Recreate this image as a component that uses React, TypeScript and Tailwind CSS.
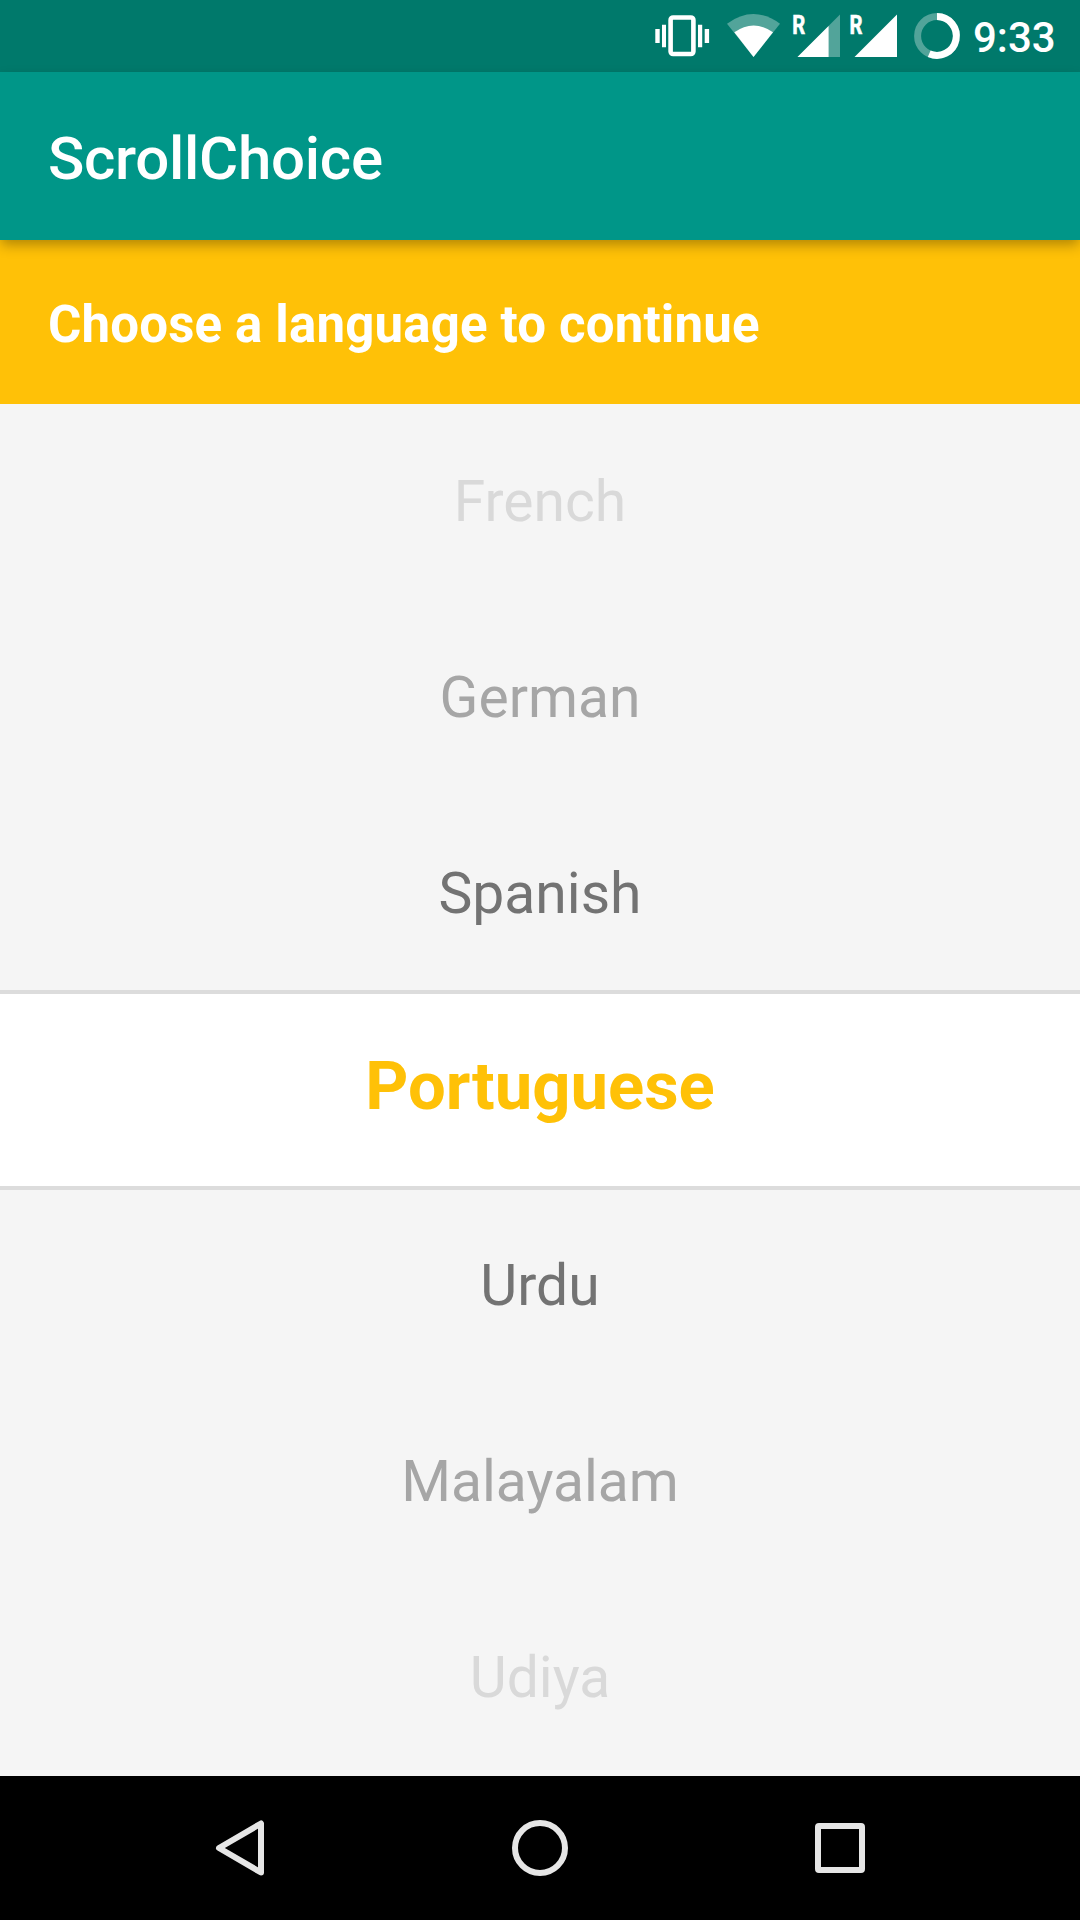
const rows = [
  { name: "French", cls: "text-[#d9d9d9]" },
  { name: "German", cls: "text-[#a6a6a6]" },
  { name: "Spanish", cls: "text-[#737373]" },
  { name: "Portuguese", cls: "" },
  { name: "Urdu", cls: "text-[#737373]" },
  { name: "Malayalam", cls: "text-[#a6a6a6]" },
  { name: "Udiya", cls: "text-[#d9d9d9]" },
];

export default function App() {
  return (
    <div className="flex h-[1920px] w-[1080px] flex-col overflow-hidden bg-[#f5f5f5] font-['Roboto',sans-serif]">
      <div className="flex h-[72px] shrink-0 bg-[#00796b]">
        <svg width="1080" height="72" viewBox="0 0 1080 72" fill="#fff">
          <rect x="670.600" y="17.500" width="22.800" height="36.500" rx="2.500" fill="none" stroke="#fff" strokeWidth="4.600" />
          <path d="M655.300 29h4.400v14h-4.400zM662 24.700h4v22.600h-4zM698 24.700h4.200v22.600h-4.200zM704.700 29h4.400v14h-4.400z" />
          <path d="M727 23.700Q753.500 4.500 780 23.700L753.500 57z" fillOpacity=".32" />
          <path d="M734.300 32.300Q753.500 18.500 773 32.300L753.500 57z" />
          <path d="M840 14.500V57H797.500z" fillOpacity=".32" />
          <path d="M828.600 25.900V57H797.500zM897 14.500V57H854.500z" />
          <circle cx="937" cy="36" r="19.400" fill="none" stroke="#fff" strokeOpacity=".32" strokeWidth="7" />
          <path d="M937 16.600a19.400 19.400 0 1 1-7.800 37.200" fill="none" stroke="#fff" strokeWidth="7" />
          <text x="792.300" y="33.500" fontSize="26" fontWeight="700" stroke="#fff" strokeWidth="0.600" textLength="13" lengthAdjust="spacingAndGlyphs">R</text>
          <text x="849.600" y="33.500" fontSize="26" fontWeight="700" stroke="#fff" strokeWidth="0.600" textLength="13" lengthAdjust="spacingAndGlyphs">R</text>
          <text x="973" y="52" fontSize="42" fontWeight="500">9:33</text>
        </svg>
      </div>
      <header className="z-10 flex h-[168px] shrink-0 items-center bg-[#009688] px-12 pt-[6px] text-[60px] font-medium tracking-[-0.27px] text-white shadow-[0_6px_12px_-1px_rgba(0,0,0,0.3)]">ScrollChoice</header>
      <div className="flex h-[164px] shrink-0 items-center bg-[#ffc107] px-12 pt-[7px] text-[51px] font-bold tracking-[0.16px] text-white">Choose a language to continue</div>
      <main className="flex h-[1372px] shrink-0 flex-col">
        {rows.map((r) =>
          r.name === "Portuguese" ? (
            <div key={r.name} className="-my-[2px] flex h-[200px] shrink-0 items-center justify-center border-y-4 border-[#dcdcdc] bg-white pb-[8px] text-[67px] font-bold text-[#ffc107]">{r.name}</div>
          ) : (
            <div key={r.name} className={"flex h-[196px] shrink-0 items-center justify-center text-[57px] " + r.cls}>{r.name}</div>
          )
        )}
      </main>
      <nav className="flex h-[144px] shrink-0 bg-black">
        <svg width="1080" height="144" viewBox="0 0 1080 144" fill="none" stroke="#e6e6e6" strokeWidth="6">
          <path d="M261 47.500V96.500L219 72z" strokeLinejoin="round" />
          <circle cx="540" cy="72" r="25" />
          <rect x="818" y="50" width="44" height="44" rx="1" strokeLinejoin="round" />
        </svg>
      </nav>
    </div>
  );
}
